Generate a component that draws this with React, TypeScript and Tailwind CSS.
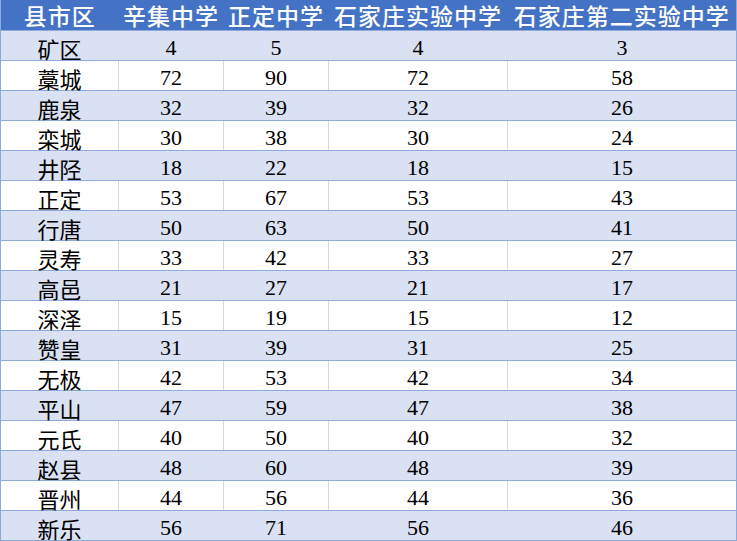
const headers = ["县市区", "辛集中学", "正定中学", "石家庄实验中学", "石家庄第二实验中学"];

const rows: [string, number, number, number, number][] = [
  ["矿区", 4, 5, 4, 3],
  ["藁城", 72, 90, 72, 58],
  ["鹿泉", 32, 39, 32, 26],
  ["栾城", 30, 38, 30, 24],
  ["井陉", 18, 22, 18, 15],
  ["正定", 53, 67, 53, 43],
  ["行唐", 50, 63, 50, 41],
  ["灵寿", 33, 42, 33, 27],
  ["高邑", 21, 27, 21, 17],
  ["深泽", 15, 19, 15, 12],
  ["赞皇", 31, 39, 31, 25],
  ["无极", 42, 53, 42, 34],
  ["平山", 47, 59, 47, 38],
  ["元氏", 40, 50, 40, 32],
  ["赵县", 48, 60, 48, 39],
  ["晋州", 44, 56, 44, 36],
  ["新乐", 56, 71, 56, 46],
];

const widths = ["w-[118px]", "w-[105px]", "w-[105px]", "w-[179px]", "w-[229px]"];

export default function App() {
  return (
    <div className="w-[737px] h-[541px] bg-white overflow-hidden">
      <table className="table-fixed border-collapse w-[736px] border-l border-r border-b border-[#8ea9db] font-['Liberation_Serif','Noto_Sans_CJK_SC',serif] text-[22px] text-black">
        <colgroup>
          {widths.map((w, i) => (
            <col key={i} className={w} />
          ))}
        </colgroup>
        <thead>
          <tr className="bg-[#4472c4] h-[30px]">
            {headers.map((h, i) => (
              <th
                key={i}
                className="p-0 pt-[1px] text-center align-middle font-['Noto_Sans_CJK_SC',sans-serif] font-medium text-[23px] leading-[28px] text-white whitespace-nowrap tracking-[1px] border-b border-[#8ea9db]"
              >
                {h}
              </th>
            ))}
          </tr>
        </thead>
        <tbody>
          {rows.map((r, ri) => {
            const banded = ri % 2 === 0;
            return (
              <tr key={ri} className={banded ? "bg-[#d9e1f2] h-[30px]" : "bg-white h-[30px]"}>
                {r.map((c, ci) => (
                  <td
                    key={ci}
                    className={
                      "p-0 pt-[5px] text-center align-middle leading-[24px] border-b border-[#8ea9db] " +
                      (ci < 4 ? (banded ? "border-r border-r-[#d9e1f2]" : "border-r border-r-[#d9d9d9]") : "") +
                      (ci === 0 ? " font-['Noto_Sans_CJK_SC',sans-serif] text-[22px]" : "")
                    }
                  >
                    {c}
                  </td>
                ))}
              </tr>
            );
          })}
        </tbody>
      </table>
    </div>
  );
}
